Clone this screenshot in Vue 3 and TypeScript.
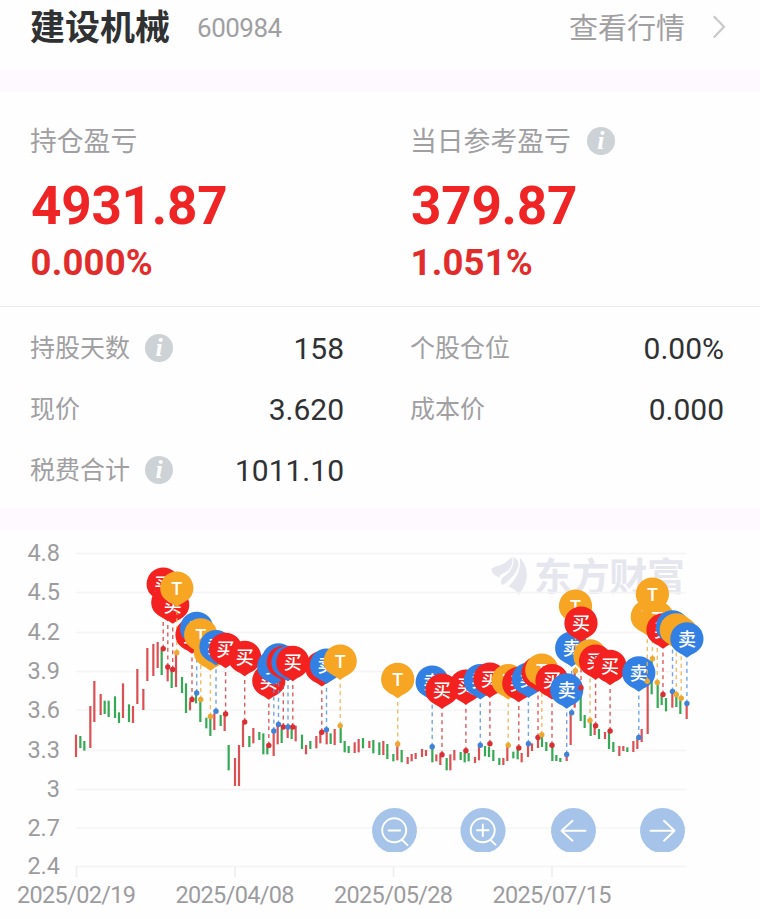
<script setup lang="ts">
type Kind = 'buy' | 'sell' | 't'
type Bar = [x: number, high: number, low: number, up: 0 | 1]

interface Stat {
  label: string
  value: string
  info?: boolean
}

const summary = [
  { label: '持仓盈亏', value: '4931.87', pct: '0.000%', info: false },
  { label: '当日参考盈亏', value: '379.87', pct: '1.051%', info: true },
]

const stats: Stat[][] = [
  [
    { label: '持股天数', value: '158', info: true },
    { label: '个股仓位', value: '0.00%' },
  ],
  [
    { label: '现价', value: '3.620' },
    { label: '成本价', value: '0.000' },
  ],
  [{ label: '税费合计', value: '1011.10', info: true }],
]

const yAxis = [
  { text: '4.8', y: 553.5 },
  { text: '4.5', y: 592.5 },
  { text: '4.2', y: 632.5 },
  { text: '3.9', y: 671.5 },
  { text: '3.6', y: 710 },
  { text: '3.3', y: 750.5 },
  { text: '3', y: 789.5 },
  { text: '2.7', y: 828 },
  { text: '2.4', y: 866.5 },
]

const xAxis = [
  { text: '2025/02/19', x: 76.5 },
  { text: '2025/04/08', x: 235 },
  { text: '2025/05/28', x: 393.5 },
  { text: '2025/07/15', x: 552 },
]

// Price bars in thirds of a pixel, relative to each segment's origin.
const segments: { x: number; y: number; bars: Bar[] }[] = [
  {
    x: 60,
    y: 540,
    bars: [
      [48, 584, 651, 1], [61, 588, 624, 0], [73, 603, 632, 0], [91, 498, 624, 1], [103, 423, 546, 1],
      [122, 462, 525, 1], [134, 482, 522, 0], [146, 482, 531, 0], [165, 469, 534, 0], [177, 517, 549, 0],
      [189, 430, 534, 1], [207, 493, 546, 0], [219, 498, 549, 1], [232, 387, 492, 1], [250, 447, 510, 1],
      [262, 324, 423, 1], [280, 312, 408, 1], [293, 306, 384, 1], [305, 330, 405, 0], [323, 380, 424, 1],
      [335, 392, 444, 0], [348, 340, 441, 1], [366, 411, 459, 0], [378, 430, 519, 0], [390, 484, 511, 1],
      [408, 465, 490, 0], [421, 484, 546, 0], [439, 533, 565, 0], [451, 533, 588, 0], [463, 520, 570, 1],
    ],
  },
  {
    x: 200,
    y: 600,
    bars: [
      [62, 345, 378, 0], [74, 345, 393, 1], [86, 435, 511, 0], [105, 474, 558, 1], [117, 435, 558, 1],
      [129, 371, 441, 1], [148, 408, 441, 0], [160, 384, 430, 1], [178, 396, 420, 0], [190, 400, 463, 0],
      [202, 441, 463, 0], [221, 393, 468, 1], [233, 372, 433, 1], [245, 386, 429, 0], [263, 384, 414, 1],
      [275, 386, 417, 0], [287, 377, 424, 1], [306, 404, 447, 0], [318, 435, 463, 1], [331, 423, 447, 0],
      [349, 408, 445, 1], [361, 395, 430, 1], [380, 388, 433, 1], [392, 400, 432, 0], [404, 387, 435, 1],
      [422, 380, 429, 0], [434, 423, 457, 0], [446, 438, 459, 0], [464, 427, 459, 1], [476, 417, 457, 1],
    ],
  },
  {
    x: 340,
    y: 630,
    bars: [
      [69, 324, 355, 0], [88, 333, 354, 1], [100, 330, 370, 0], [118, 337, 375, 0], [130, 333, 375, 1],
      [142, 342, 387, 0], [160, 372, 394, 0], [172, 345, 391, 1], [185, 360, 397, 0], [203, 381, 402, 1],
      [215, 372, 394, 1], [227, 369, 387, 1], [246, 357, 381, 1], [258, 360, 378, 1], [277, 350, 397, 0],
      [289, 373, 394, 1], [301, 378, 405, 1], [320, 384, 421, 0], [331, 373, 421, 1], [343, 360, 391, 1],
      [362, 366, 390, 0], [374, 368, 397, 0], [386, 369, 394, 0], [405, 381, 399, 1], [417, 350, 391, 1],
      [435, 348, 379, 0], [447, 350, 381, 0],
    ],
  },
  {
    x: 470,
    y: 580,
    bars: [
      [70, 510, 543, 0], [88, 534, 555, 0], [100, 534, 555, 1], [112, 500, 543, 1], [130, 515, 535, 0],
      [143, 510, 538, 0], [155, 519, 547, 1], [174, 493, 531, 1], [186, 490, 513, 1], [204, 470, 504, 1],
      [216, 468, 501, 0], [229, 486, 513, 0], [247, 499, 543, 0], [259, 525, 543, 0], [271, 534, 546, 0],
      [290, 522, 543, 1], [302, 398, 495, 1], [314, 275, 383, 1], [332, 330, 423, 0], [344, 405, 444, 0],
      [362, 421, 468, 0], [374, 438, 465, 1], [387, 447, 477, 0],
    ],
  },
  {
    x: 600,
    y: 540,
    bars: [
      [15, 576, 597, 1], [27, 573, 627, 0], [40, 606, 636, 0], [58, 618, 648, 1], [70, 618, 633, 1],
      [82, 622, 636, 0], [100, 603, 636, 1], [112, 596, 627, 1], [125, 567, 606, 1], [143, 424, 582, 1],
      [155, 360, 463, 0], [173, 430, 504, 0], [185, 465, 495, 0], [198, 474, 514, 0], [217, 457, 503, 1],
      [229, 465, 501, 0], [241, 475, 522, 0], [260, 492, 537, 1],
    ],
  },
]

const bars = segments.flatMap((s) =>
  s.bars.map(([x, high, low, up]) => ({
    x: s.x + x / 3,
    y1: s.y + high / 3,
    y2: s.y + low / 3,
    up: up === 1,
  })),
)

const PIN_OFFSET = 64.7

const glyphs: Record<Kind, string> = { buy: '买', sell: '卖', t: 'T' }

const trades: [Kind, number, number][] = [
  ['buy', 163.2, 648.7], ['buy', 167.8, 667], ['buy', 172.7, 669.5], ['t', 176.8, 652.7],
  ['buy', 192, 699.5], ['sell', 196.7, 693], ['t', 200.7, 699.5], ['t', 210.4, 716.5],
  ['sell', 216, 711.3], ['buy', 225.6, 714], ['buy', 244.7, 722], ['buy', 268.8, 745.5],
  ['sell', 273.8, 731], ['sell', 278.5, 724.5], ['buy', 283.3, 727], ['sell', 288, 727],
  ['buy', 292.8, 727], ['buy', 321.8, 732.3], ['sell', 326.5, 729.7], ['t', 340.2, 725.7],
  ['t', 397.7, 744], ['sell', 432.2, 746.7], ['buy', 442, 754.7], ['buy', 465.9, 750.7],
  ['sell', 480.3, 745.3], ['buy', 489.9, 743.7], ['t', 508.2, 745.3], ['buy', 518.8, 748],
  ['sell', 528.4, 743.7], ['buy', 538, 737.5], ['t', 541.8, 734.7], ['buy', 552, 745.3],
  ['sell', 571.7, 712.7], ['sell', 566.7, 754.5], ['t', 575.5, 670.7], ['buy', 581, 687.7],
  ['t', 590, 720.5], ['buy', 595.6, 725.7], ['buy', 610.1, 731], ['sell', 638.8, 737.5],
  ['t', 647.3, 681.3], ['t', 652.4, 658.7], ['t', 657.3, 682.5], ['buy', 663, 694.5],
  ['sell', 672.5, 691.5], ['t', 676.3, 694.5], ['t', 681.2, 698.2], ['sell', 686.9, 703.5],
]

const pinPath =
  'M0 -16.6 A16.6 16.6 0 0 1 16.6 0 C16.6 5.8 14 9.8 10 12.6 C6.4 15 2.8 16.4 0 19 C-2.8 16.4 -6.4 15 -10 12.6 C-14 9.8 -16.6 5.8 -16.6 0 A16.6 16.6 0 0 1 0 -16.6 Z'

const controls = [
  { x: 394.5, d: 'M11.7 -0.2 A12 12 0 1 1 -12.3 -0.2 A12 12 0 1 1 11.7 -0.2 M-6 0 H5.7 M7.4 9.2 L13 14.6' },
  { x: 483, d: 'M11.7 -0.2 A12 12 0 1 1 -12.3 -0.2 A12 12 0 1 1 11.7 -0.2 M-6 -0.2 H5.6 M-0.2 -6 V5.6 M7.4 9.2 L12.6 14.2' },
  { x: 573.5, d: 'M12 0.3 H-12 M-1 -9.8 L-12 0.3 L-1 10.2' },
  { x: 662.5, d: 'M-12 0.3 H12 M1.5 -9.8 L12 0.3 L1.5 10.2' },
]
</script>

<template>
  <main class="page">
    <header class="head">
      <h1 class="name">建设机械</h1>
      <span class="code">600984</span>
      <a class="more">查看行情</a>
      <svg class="chevron" width="14" height="26" viewBox="0 0 14 26">
        <path d="M1.8 2.2 L12 12.8 L1.8 23.6" />
      </svg>
    </header>

    <div class="band"></div>

    <section class="summary">
      <div v-for="s in summary" :key="s.label" class="cell">
        <div class="label big-label">
          <span class="caption">{{ s.label }}</span>
          <i v-if="s.info" class="info">i</i>
        </div>
        <div class="amount">{{ s.value }}</div>
        <div class="pct">{{ s.pct }}</div>
      </div>
    </section>

    <section class="stats">
      <div v-for="(row, r) in stats" :key="r" class="row">
        <div v-for="s in row" :key="s.label" class="stat">
          <div class="label">
            <span class="caption">{{ s.label }}</span>
            <i v-if="s.info" class="info">i</i>
          </div>
          <span class="value">{{ s.value }}</span>
        </div>
      </div>
    </section>

    <div class="band"></div>

    <svg class="chart" width="760" height="389" viewBox="0 530 760 389">
      <g class="watermark">
        <path d="M491.5 568.5 C497 565 503 566 509 559.5 C511 558 512 557.5 512.5 557 C513 565 510 571 503 573.5 C499 575 500 577 499.5 577.5 C495 576 491.5 573 491.5 568.5 Z" />
        <path d="M513.8 557 C517 559 518 561 518.5 563 C518.5 571 512 578 505 583.5 C504 584.5 503 585 501.5 584.5 C500.5 582 501 579 504 576.5 C510 572 514 567 513.8 557 Z" />
        <path d="M519.8 557.5 C525 563 527.5 570 526.8 577 C526.3 584 522 590 518.7 595 C517 591 513 588 508.5 586.5 C515 580 521.5 571 519.8 557.5 Z" />
        <text x="534" y="589.5" textLength="151">东方财富</text>
      </g>

      <line v-for="a in yAxis" :key="a.text" class="grid" x1="76" x2="686" :y1="a.y" :y2="a.y" />
      <line v-for="a in xAxis" :key="a.text" class="tick" :x1="a.x" :x2="a.x" y1="866" y2="877" />

      <text v-for="a in yAxis" :key="a.text" class="axis end" x="60" :y="a.y + 7.5">{{ a.text }}</text>
      <text v-for="a in xAxis" :key="a.text" class="axis" :x="a.x - 59.5" y="902.5" textLength="119">{{ a.text }}</text>

      <line
        v-for="(b, i) in bars"
        :key="i"
        :class="b.up ? 'up' : 'down'"
        :x1="b.x"
        :x2="b.x"
        :y1="b.y1"
        :y2="b.y2"
      />

      <g v-for="([kind, x, y], i) in trades" :key="i" :class="kind">
        <line class="stem" :x1="x" :x2="x" :y1="y" :y2="y - PIN_OFFSET + 20" />
        <circle class="dot" :cx="x" :cy="y" r="2.7" />
        <g :transform="`translate(${x} ${y - PIN_OFFSET})`">
          <path class="pin" :d="pinPath" />
          <text class="glyph" y="6.8">{{ glyphs[kind] }}</text>
        </g>
      </g>

      <g v-for="c in controls" :key="c.x" class="control" :transform="`translate(${c.x} 830.5)`">
        <path class="disc" d="M-7 21.5 A22.5 22.5 0 1 1 7 21.5 Z" />
        <path class="icon" :d="c.d" />
      </g>
    </svg>
  </main>
</template>

<style>
body {
  margin: 0;
  background: #fff;
}
</style>

<style scoped>
.page {
  width: 760px;
  height: 919px;
  overflow: hidden;
  background: #fefefe;
  color: #303132;
  font-family: Roboto, 'Noto Sans CJK SC', sans-serif;
}

.head {
  display: flex;
  align-items: center;
  box-sizing: border-box;
  height: 70px;
  padding: 0 34px 16px 30px;
}

.name {
  margin: 0;
  padding-top: 3px;
  font-size: 35px;
  font-weight: 700;
  line-height: 54px;
}

.code {
  margin-left: 27px;
  padding-top: 1px;
  color: #a0a0a2;
  font-size: 26px;
  letter-spacing: -0.5px;
}

.more {
  margin-left: auto;
  padding-bottom: 3px;
  color: #a0a0a2;
  font-size: 29px;
}

.chevron {
  margin-left: 27px;
  fill: none;
  stroke: #c9c9cb;
  stroke-width: 2.2;
}

.band {
  height: 22px;
  background: #fdf9fe;
}

.summary {
  display: grid;
  grid-template-columns: 380px 380px;
  padding: 29px 0 23px;
  border-bottom: 1px solid #ebebeb;
}

.cell {
  padding-left: 30px;
}

.label {
  display: flex;
  align-items: center;
  gap: 15px;
  color: #a0a0a2;
  font-size: 25px;
  white-space: nowrap;
}

.caption {
  padding-bottom: 4px;
}

.big-label {
  gap: 16px;
  height: 40px;
  font-size: 26.8px;
}

.info {
  width: 28px;
  height: 28px;
  border-radius: 50%;
  background: #ccd2d5;
  color: #fff;
  font: italic 700 26px/27px 'Liberation Serif', serif;
  text-align: center;
}

.amount {
  height: 60px;
  margin: 15px 0 0 1px;
  color: #ef2424;
  font-size: 53px;
  font-weight: 700;
  line-height: 60px;
  letter-spacing: -0.2px;
}

.pct {
  height: 40px;
  margin: 7px 0 0 0.5px;
  color: #e22c2b;
  font-size: 36.5px;
  font-weight: 700;
  line-height: 40px;
  letter-spacing: 0.2px;
}

.stats {
  padding: 10px 0 8px;
}

.row {
  display: grid;
  grid-template-columns: 380px 380px;
  height: 61px;
}

.stat {
  display: flex;
  align-items: center;
  justify-content: space-between;
  padding: 0 36px 0 30px;
}

.value {
  padding-top: 1px;
  font-size: 30px;
}

.chart {
  display: block;
}

.watermark {
  fill: #e6e6ef;
}

.watermark text {
  font: 700 38px 'Noto Sans CJK SC', sans-serif;
}

.grid {
  stroke: #f4f4f4;
  stroke-width: 1.6;
}

.tick {
  stroke: #efedef;
  stroke-width: 1.6;
}

.axis {
  fill: #9c9c9e;
  font-size: 23.5px;
}

.end {
  text-anchor: end;
}

.up,
.down {
  stroke-width: 2.2;
}

.up {
  stroke: #dc5054;
}

.down {
  stroke: #35a853;
}

.stem {
  stroke-width: 1.4;
  stroke-dasharray: 4 3.6;
  opacity: 0.85;
}

.buy .stem {
  stroke: #d84045;
}

.sell .stem {
  stroke: #5a96e0;
}

.t .stem {
  stroke: #efb24c;
}

.buy .dot {
  fill: #d92e33;
}

.sell .dot {
  fill: #3f83d8;
}

.t .dot {
  fill: #eda733;
}

.buy .pin {
  fill: #f32220;
}

.sell .pin {
  fill: #3280e4;
}

.t .pin {
  fill: #f7a623;
}

.glyph {
  fill: #fff;
  font-size: 18px;
  font-weight: 500;
  text-anchor: middle;
}

.disc {
  fill: #a3c1e8;
  opacity: 0.97;
}

.icon {
  fill: none;
  stroke: #fff;
  stroke-width: 1.9;
  stroke-linecap: round;
  stroke-linejoin: round;
}
</style>
